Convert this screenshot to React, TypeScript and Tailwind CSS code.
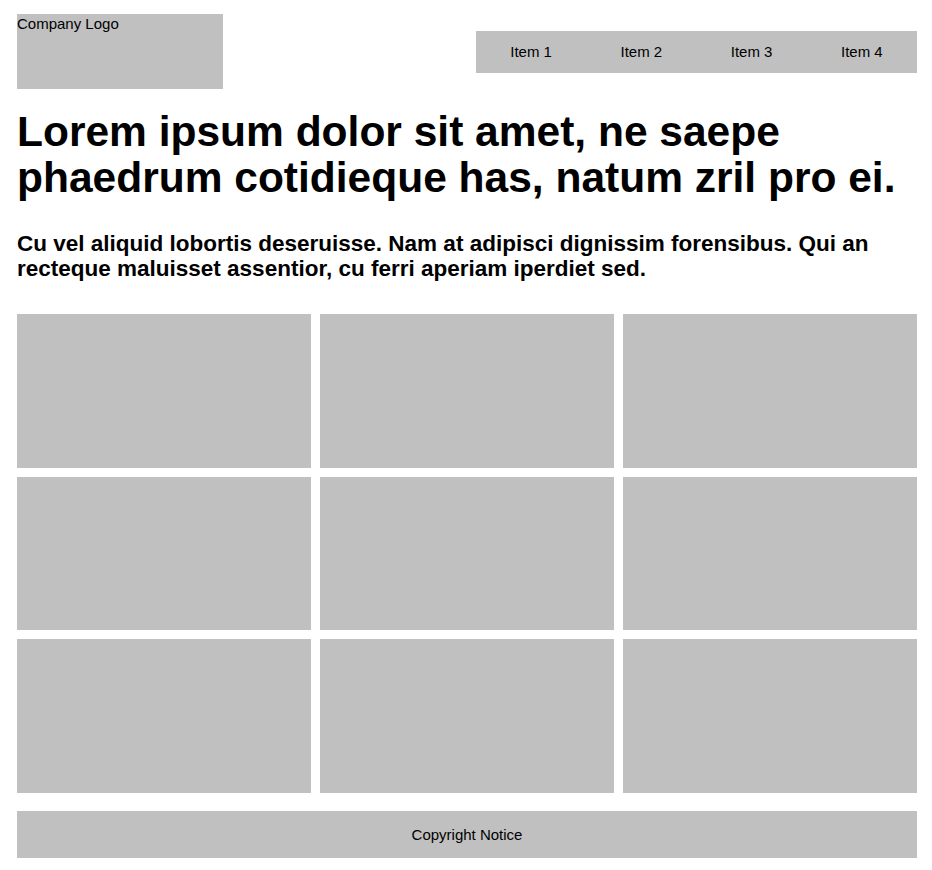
const tiles = Array.from({ length: 9 });
const navItems = ["Item 1", "Item 2", "Item 3", "Item 4"];

export default function App() {
  return (
    <div className="min-h-screen bg-white font-['Liberation_Sans',Arial,sans-serif] text-black">
      <div className="ml-[17px] w-[900px] pt-[14px] pb-[12px]">
        {/* Header */}
        <header className="flex items-start justify-between">
          <div className="h-[75px] w-[206px] bg-[#c0c0c0] text-[15px] leading-[19px]">
            Company Logo
          </div>
          <nav className="mt-[17px] flex h-[42px] w-[441px] bg-[#c0c0c0] text-[15px]">
            {navItems.map((item) => (
              <div key={item} className="flex flex-1 items-center justify-center">
                {item}
              </div>
            ))}
          </nav>
        </header>

        {/* Intro */}
        <h1 className="mt-[20px] text-[42.5px] font-bold leading-[46px]">
          Lorem ipsum dolor sit amet, ne saepe phaedrum cotidieque has, natum zril pro ei.
        </h1>
        <h2 className="mt-[30px] text-[22.5px] font-bold leading-[25px]">
          Cu vel aliquid lobortis deseruisse. Nam at adipisci dignissim forensibus. Qui an recteque maluisset
          assentior, cu ferri aperiam iperdiet sed.
        </h2>

        {/* Tiles */}
        <div className="mt-[33px] grid grid-cols-3 gap-[9px]">
          {tiles.map((_, i) => (
            <div key={i} className="h-[153.67px] bg-[#c0c0c0]" />
          ))}
        </div>

        {/* Footer */}
        <footer className="mt-[18px] flex h-[47px] items-center justify-center bg-[#c0c0c0] pt-[2px] text-[15px]">
          Copyright Notice
        </footer>
      </div>
    </div>
  );
}
